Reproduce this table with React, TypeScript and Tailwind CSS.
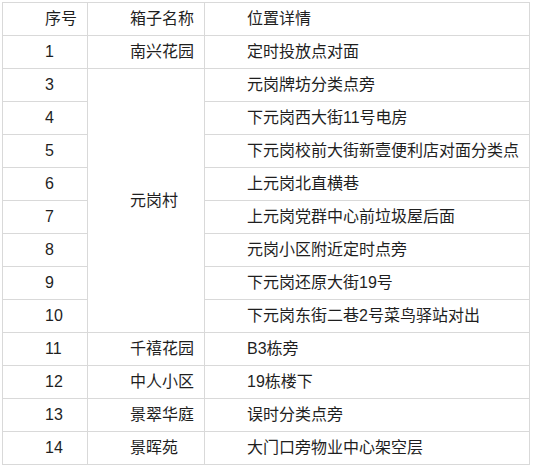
const rows: { no: string; name?: string; span?: number; place: string }[] = [
  { no: '1', name: '南兴花园', place: '定时投放点对面' },
  { no: '3', name: '元岗村', span: 8, place: '元岗牌坊分类点旁' },
  { no: '4', place: '下元岗西大街11号电房' },
  { no: '5', place: '下元岗校前大街新壹便利店对面分类点' },
  { no: '6', place: '上元岗北直横巷' },
  { no: '7', place: '上元岗党群中心前垃圾屋后面' },
  { no: '8', place: '元岗小区附近定时点旁' },
  { no: '9', place: '下元岗还原大街19号' },
  { no: '10', place: '下元岗东街二巷2号菜鸟驿站对出' },
  { no: '11', name: '千禧花园', place: 'B3栋旁' },
  { no: '12', name: '中人小区', place: '19栋楼下' },
  { no: '13', name: '景翠华庭', place: '误时分类点旁' },
  { no: '14', name: '景晖苑', place: '大门口旁物业中心架空层' },
]

const cell = 'border border-[#d9d9d9] pl-[42px] pr-1 h-[33px] text-left align-middle whitespace-nowrap'

export default function App() {
  return (
    <div className="w-[533px] h-[469px] bg-white pt-[2px] pl-[2px]" style={{ fontFamily: '"Liberation Sans", "Noto Sans CJK SC", sans-serif' }}>
      <table className="border-collapse table-fixed w-[528px] text-[16px] text-[#1f1f1f] leading-none">
        <colgroup>
          <col className="w-[85px]" />
          <col className="w-[117px]" />
          <col />
        </colgroup>
        <thead>
          <tr>
            <th className={cell + ' font-normal'}>序号</th>
            <th className={cell + ' font-normal'}>箱子名称</th>
            <th className={cell + ' font-normal'}>位置详情</th>
          </tr>
        </thead>
        <tbody>
          {rows.map((r) => (
            <tr key={r.no}>
              <td className={cell}>{r.no}</td>
              {r.name && (
                <td className={cell} rowSpan={r.span ?? 1}>{r.name}</td>
              )}
              <td className={cell}>{r.place}</td>
            </tr>
          ))}
        </tbody>
      </table>
    </div>
  )
}
